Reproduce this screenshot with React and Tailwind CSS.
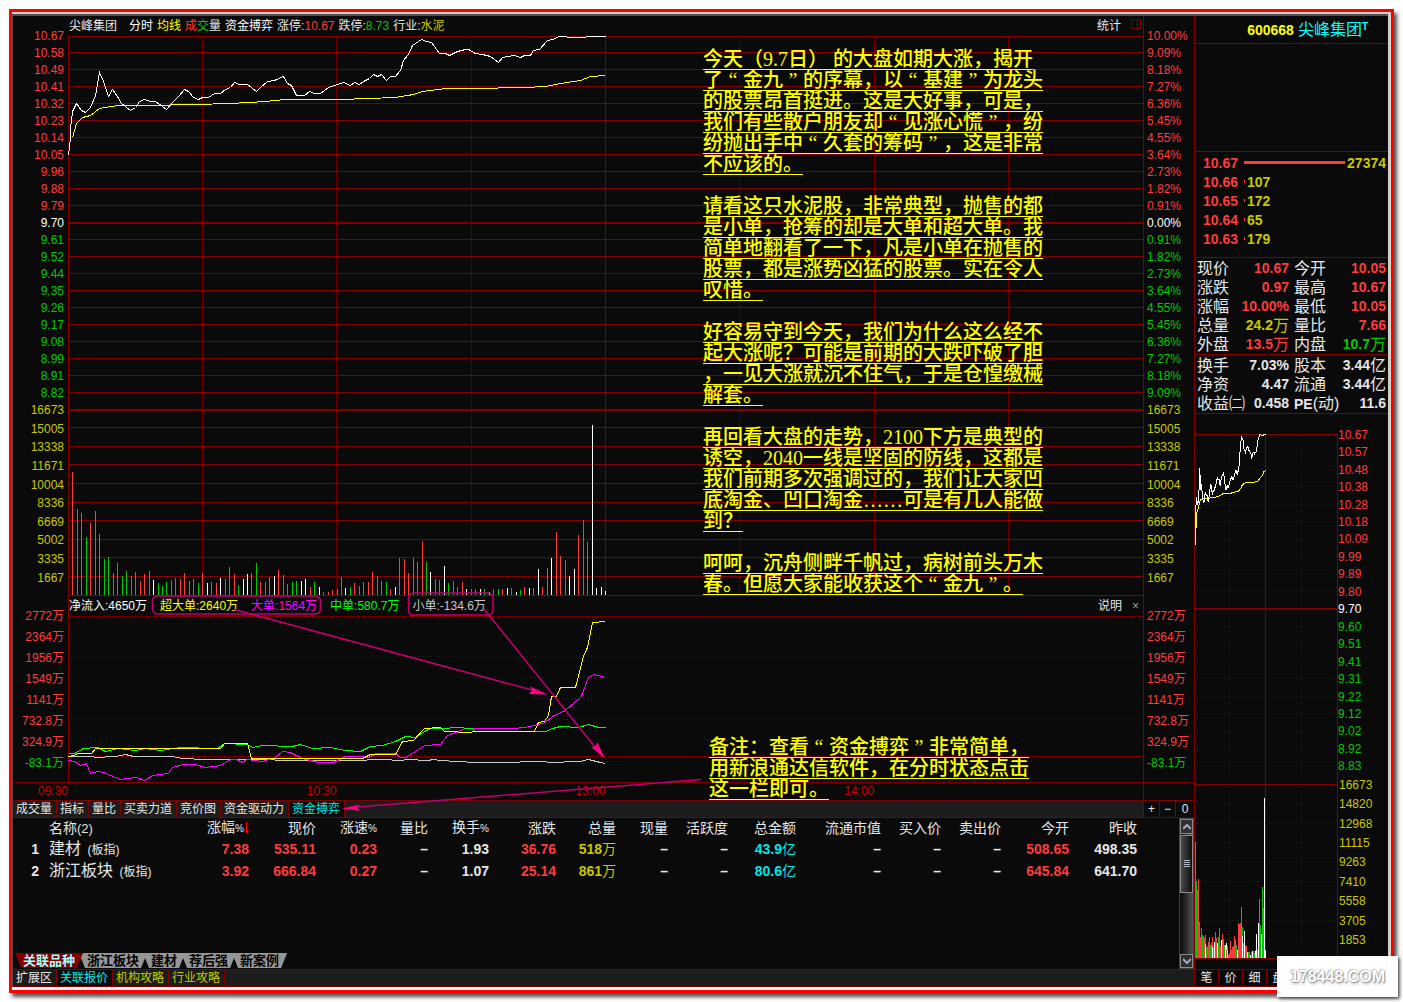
// src/App.jsx
import React from 'react';

const TONES = {
  r: 'text-[#ff3c3c]',
  g: 'text-[#00c800]',
  w: 'text-white',
  y: 'text-[#c8c800]',
  c: 'text-[#00e6e6]',
  s: 'text-[#e6e6e6]',
};

const BAR_COLORS = { r: '#ff3c3c', g: '#00c800', w: '#ffffff' };

const priceLabels = [
  '10.67', '10.58', '10.49', '10.41', '10.32', '10.23', '10.14', '10.05', '9.96', '9.88', '9.79',
  '9.70', '9.61', '9.52', '9.44', '9.35', '9.26', '9.17', '9.08', '8.99', '8.91', '8.82',
];
const percentLabels = [
  '10.00%', '9.09%', '8.18%', '7.27%', '6.36%', '5.45%', '4.55%', '3.64%', '2.73%', '1.82%', '0.91%',
  '0.00%', '0.91%', '1.82%', '2.73%', '3.64%', '4.55%', '5.45%', '6.36%', '7.27%', '8.18%', '9.09%',
];
const volumeLabels = ['16673', '15005', '13338', '11671', '10004', '8336', '6669', '5002', '3335', '1667'];
const fundLabels = ['2772万', '2364万', '1956万', '1549万', '1141万', '732.8万', '324.9万', '-83.1万'];

const miniPriceLabels = [
  '10.67', '10.57', '10.48', '10.38', '10.28', '10.18', '10.09', '9.99', '9.89', '9.80',
  '9.70', '9.60', '9.51', '9.41', '9.31', '9.22', '9.12', '9.02', '8.92', '8.83',
];
const miniVolumeLabels = ['16673', '14820', '12968', '11115', '9263', '7410', '5558', '3705', '1853'];

const priceLine =
  '68,155 70,137 70,128 72,111 76,103 81,110 85,112 90,107 95,95 99,72 103,81 108,96 112,89 117,96 121,103 130,110 135,107 139,101 144,99 150,101 155,101 162,106 166,109 172,102 178,96 184,89 188,91 193,97 198,99 202,97 208,97 214,93 220,93 225,89 230,87 234,82 239,84 247,84 256,91 260,87 267,81 274,80 283,76 287,83 291,85 296,95 304,95 309,91 314,93 320,93 328,87 337,84 343,82 350,85 354,82 359,84 363,81 369,78 373,74 377,76 381,74 386,80 390,76 395,76 400,70 403,60 408,54 412,45 421,39 426,41 431,42 439,53 445,53 449,55 457,51 465,49 468,49 475,53 482,54 490,56 498,62 502,57 514,55 520,57 524,55 530,55 533,50 539,49 547,40 553,39 558,36 575,37 583,37 588,36 605,36';
const averageLine =
  '72,137 76,123 82,117 90,115 99,108 110,106 120,105 145,105 195,104 230,103 265,101 285,99 340,99 395,97 413,94 422,91 445,88 470,88 525,87 545,86 560,83 580,80 590,76 605,75';

const fundLines = [
  {
    color: '#c8c8c8',
    points:
      '68,756 92,756 95,757 115,756 125,754 133,756 172,756 182,758 205,759 258,759 290,760 350,760 383,759 400,760 407,759 428,760 432,759 440,760 475,762 495,762 545,761 548,762 579,761 588,759 600,762 605,763',
  },
  {
    color: '#ff00ff',
    points:
      '68,760 74,761 80,765 86,763 90,773 97,771 103,772 110,775 120,779 136,777 144,780 152,775 168,773 172,767 182,764 195,764 205,767 220,765 230,759 236,759 242,762 246,759 262,761 275,757 282,751 290,752 302,758 318,762 333,762 345,756 360,756 368,757 376,753 395,753 400,757 405,757 415,751 424,745 440,744 447,735 460,730 465,728 515,728 530,726 545,722 552,716 565,710 575,701 580,698 588,677 593,674 598,675 605,677',
  },
  {
    color: '#00ff00',
    points:
      '68,753 74,753 83,748 97,747 105,751 118,748 135,750 145,748 160,750 180,747 217,748 224,743 247,744 252,747 262,745 292,746 300,744 312,748 330,747 345,750 360,751 370,746 382,745 395,741 405,736 415,737 424,731 430,728 445,728 455,727 472,728 475,731 545,731 552,728 560,726 578,727 588,724 598,727 605,727',
  },
  {
    color: '#ffff00',
    points:
      '68,756 73,755 78,753 91,753 95,748 220,748 224,743 247,743 251,758 362,758 370,754 395,754 402,741 413,740 424,728 440,727 444,731 470,732 473,731 534,731 538,722 544,721 548,715 551,696 556,696 560,687 575,687 583,656 587,647 592,622 605,621',
  },
];

// one entry per minute pair: colour + bar height
const volumes = (
  'r123 r86 g82 g58 r72 r84 r61 g36 g38 r22 g32 g19 g24 g19 r23 r14 r21 g24 w15 g12 g9 g13 r15 r17 r16 r22 g14 g16 g12 r22 ' +
  'w12 r13 r12 w17 r16 r28 r21 g10 w16 w21 g22 g32 r13 r13 r18 w19 r25 r20 g11 g13 g14 w14 w16 r8 g13 w8 r3 r3 r5 r6 ' +
  'r18 w7 g8 r12 g9 r13 r13 r23 g19 r14 g13 r6 w8 r37 r36 r22 r37 r33 r54 g33 w23 g16 g15 w29 g12 r14 r8 r13 w6 g6 ' +
  'g6 w6 g6 w3 g6 g6 r6 w7 r7 w3 g5 r8 w7 r7 w26 r8 r27 w37 r63 r39 g35 w19 w26 r60 g75 r53 w170 w7 w8 w4'
)
  .split(' ')
  .map((item) => ({ color: BAR_COLORS[item[0]], height: Number(item.slice(1)) }));

const priceGrid = [36, 52, 69, 86, 103, 120, 137, 154, 171, 188, 205, 239, 256, 273, 290, 307, 324, 341, 358, 375, 392];
const volumeGrid = [427, 446, 464, 483, 502, 520, 539, 557, 576, 595];
const fundGrid = [635, 656, 677, 698, 719, 740, 761];

const article = [
  '今天（9.7日） 的大盘如期大涨，揭开',
  '了“金九”的序幕，以“基建”为龙头',
  '的股票昂首挺进。这是大好事，可是，',
  '我们有些散户朋友却“见涨心慌”，纷',
  '纷抛出手中“久套的筹码”，这是非常',
  '不应该的。',
  '',
  '请看这只水泥股，非常典型，抛售的都',
  '是小单，抢筹的却是大单和超大单。我',
  '简单地翻看了一下，凡是小单在抛售的',
  '股票，都是涨势凶猛的股票。实在令人',
  '叹惜。',
  '',
  '好容易守到今天，我们为什么这么经不',
  '起大涨呢？可能是前期的大跌吓破了胆',
  '，一见大涨就沉不住气，于是仓惶缴械',
  '解套。',
  '',
  '再回看大盘的走势，2100下方是典型的',
  '诱空，2040一线是坚固的防线，这都是',
  '我们前期多次强调过的，我们让大家凹',
  '底淘金、凹口淘金……可是有几人能做',
  '到？',
  '',
  '呵呵，沉舟侧畔千帆过，病树前头万木',
  '春。但愿大家能收获这个“金九”。',
];
const footnote = ['备注：查看“资金搏弈”非常简单，', '用新浪通达信软件，在分时状态点击', '这一栏即可。'];

const orders = [
  ['10.67', '27374'],
  ['10.66', '107'],
  ['10.65', '172'],
  ['10.64', '65'],
  ['10.63', '179'],
];

const quotes = [
  ['现价', '10.67', '', 'r'], ['今开', '10.05', '', 'r'],
  ['涨跌', '0.97', '', 'r'], ['最高', '10.67', '', 'r'],
  ['涨幅', '10.00%', '', 'r'], ['最低', '10.05', '', 'r'],
  ['总量', '24.2', '万', 'y'], ['量比', '7.66', '', 'r'],
  ['外盘', '13.5', '万', 'r'], ['内盘', '10.7', '万', 'g'],
];
const ratios = [
  ['换手', '7.03%', '', 's'], ['股本', '3.44', '亿', 's'],
  ['净资', '4.47', '', 's'], ['流通', '3.44', '亿', 's'],
  ['收益㈡', '0.458', '', 's'], ['PE(动)', '11.6', '', 's'],
];

const columns = [
  ['涨幅%', 'w-[60px]'], ['现价', 'w-[67px]'], ['涨速%', 'w-[61px]'], ['量比', 'w-[51px]'],
  ['换手%', 'w-[61px]'], ['涨跌', 'w-[67px]'], ['总量', 'w-[60px]'], ['现量', 'w-[52px]'],
  ['活跃度', 'w-[60px]'], ['总金额', 'w-[68px]'], ['流通市值', 'w-[85px]'], ['买入价', 'w-[60px]'],
  ['卖出价', 'w-[60px]'], ['今开', 'w-[68px]'], ['昨收', 'w-[68px]'],
];
const rows = [
  {
    name: '建材',
    cells: [['7.38', 'r'], ['535.11', 'r'], ['0.23', 'r'], ['–', 's'], ['1.93', 's'], ['36.76', 'r'], ['518万', 'y'], ['–', 's'], ['–', 's'], ['43.9亿', 'c'], ['–', 's'], ['–', 's'], ['–', 's'], ['508.65', 'r'], ['498.35', 's']],
  },
  {
    name: '浙江板块',
    cells: [['3.92', 'r'], ['666.84', 'r'], ['0.27', 'r'], ['–', 's'], ['1.07', 's'], ['25.14', 'r'], ['861万', 'y'], ['–', 's'], ['–', 's'], ['80.6亿', 'c'], ['–', 's'], ['–', 's'], ['–', 's'], ['645.84', 'r'], ['641.70', 's']],
  },
];

function toneFor(index, zeroIndex) {
  if (index === zeroIndex) return TONES.w;
  return index < zeroIndex ? TONES.r : TONES.g;
}

function Axis({ prices, side }) {
  const align = side === 'left' ? 'w-[55px] pr-1 text-right' : 'w-[51px] border-l border-[#800000] pl-[3px]';
  return (
    <div className={`shrink-0 pt-[11px] text-xs ${align}`}>
      {prices.map((label, i) => (
        <div key={i} className={`h-[17px] leading-[18px] ${toneFor(i, 11)}`}>{label}</div>
      ))}
      <div className="flex h-[186px] flex-col text-[#c8c800]">
        {volumeLabels.map((label) => (
          <div key={label} className="flex flex-1 items-center"><span className="w-full">{label}</span></div>
        ))}
      </div>
      <div className="pt-[19px]">
        {fundLabels.map((label, i) => (
          <div key={label} className={`h-[21px] leading-[21px] ${toneFor(i, 6.5)}`}>{label}</div>
        ))}
      </div>
    </div>
  );
}

function PricePlot() {
  return (
    <svg viewBox="68 36 1075 560" preserveAspectRatio="none" className="block h-[560px] w-full" shapeRendering="crispEdges">
      <g stroke="#800000" strokeWidth="1">
        {[...priceGrid, ...volumeGrid].map((y) => (
          <line key={y} x1="68" x2="1143" y1={y + 0.5} y2={y + 0.5} />
        ))}
        <line x1="68" x2="1143" y1="223" y2="223" strokeWidth="2" />
        <line x1="68" x2="1143" y1="410" y2="410" strokeWidth="2" />
        <line x1="68.5" x2="68.5" y1="36" y2="596" />
        <line x1="605.5" x2="605.5" y1="36" y2="596" />
        {[202, 336, 471, 739, 874, 1008].map((x) => (
          <line key={x} x1={x + 0.5} x2={x + 0.5} y1="38" y2="595" strokeDasharray="1 1" />
        ))}
      </g>
      {volumes.map((bar, i) => (
        <rect key={i} x={Math.round(68 + 4.475 * (i + 1))} y={595 - bar.height} width="1" height={bar.height} fill={bar.color} />
      ))}
      <g fill="none" strokeWidth="1" transform="translate(0.5 0.5)">
        <polyline points={averageLine} stroke="#ffff00" />
        <polyline points={priceLine} stroke="#ffffff" />
      </g>
    </svg>
  );
}

function FundPlot() {
  return (
    <svg viewBox="68 616 1075 166" preserveAspectRatio="none" className="block h-[166px] w-full" shapeRendering="crispEdges">
      <g stroke="#800000" strokeWidth="1">
        {fundGrid.map((y) => (
          <line key={y} x1="71" x2="1143" y1={y + 0.5} y2={y + 0.5} strokeDasharray="1 3" />
        ))}
        <line x1="70" x2="1143" y1="616.5" y2="616.5" strokeDasharray="1 1" />
        <line x1="70" x2="1143" y1="756.5" y2="756.5" strokeDasharray="1 1" />
        <line x1="68.5" x2="68.5" y1="616" y2="782" />
      </g>
      <g fill="none" strokeWidth="1" transform="translate(0.5 0.5)">
        {fundLines.map((line) => (
          <polyline key={line.color} points={line.points} stroke={line.color} />
        ))}
      </g>
    </svg>
  );
}

function ChartHeader() {
  return (
    <div className="flex h-5 items-center justify-between pl-px text-xs whitespace-nowrap">
      <div className="flex gap-1 text-[#e6e6e6]">
        <span className="mr-2">尖峰集团</span>
        <span className="text-white">分时</span>
        <span className="text-[#ffff00]">均线</span>
        <span>
          <span className="text-[#ff3c3c]">成</span>
          <span className="text-[#00c800]">交</span>量
        </span>
        <span className="text-white">资金搏弈</span>
        <span>涨停:<span className="text-[#ff3c3c]">10.67</span></span>
        <span>跌停:<span className="text-[#00c800]">8.73</span></span>
        <span>行业:<span className="text-[#c8c800]">水泥</span></span>
      </div>
      <div className="flex items-center gap-[10px] pr-[2px]">
        <button type="button" className="text-[#e6e6e6]">统计</button>
        <svg width="10" height="10" viewBox="0 0 10 10" fill="none" stroke="#800000" className="mb-1">
          <path d="M.5.5h9v9h-9zM6.5.5v9" />
        </svg>
      </div>
    </div>
  );
}

function FundHeader() {
  return (
    <div className="flex h-5 items-center justify-between border-l border-[#800000] text-xs whitespace-nowrap">
      <div className="flex gap-[13px]">
        <span className="text-white">净流入:4650万</span>
        <span className="text-[#ffff00]">超大单:2640万</span>
        <span className="text-[#ff00ff]">大单:1564万</span>
        <span className="text-[#00ff00]">中单:580.7万</span>
        <span className="text-[#c8c8c8]">小单:-134.6万</span>
      </div>
      <div className="flex items-center gap-[10px] pr-1">
        <button type="button" className="text-[#e6e6e6]">说明</button>
        <button type="button" className="text-[#a0a0a0]">×</button>
      </div>
    </div>
  );
}

function TabCell({ children, tone }) {
  return (
    <button type="button" className={`border-r border-[#800000] pr-1 pl-[3px] ${tone}`}>
      {children}
    </button>
  );
}

function IndicatorTabs() {
  return (
    <div className="flex h-[18px] border-y border-[#800000] bg-[#1c1c1c] text-xs leading-4">
      {['成交量', '指标', '量比', '买卖力道', '竞价图', '资金驱动力'].map((name) => (
        <TabCell key={name} tone="text-[#e6e6e6]">{name}</TabCell>
      ))}
      <TabCell tone="bg-[#0a0a0a] text-[#00e6e6]">资金搏弈</TabCell>
      <div className="ml-auto flex bg-[#0a0a0a] text-[#e6e6e6]">
        <button type="button" className="w-4 border-l border-[#800000]">+</button>
        <button type="button" className="w-4 border-l border-[#800000]">−</button>
        <button type="button" className="w-[19px] border-l border-[#800000]">0</button>
      </div>
    </div>
  );
}

// digits are bold, the 万/亿 unit is regular
function Amount({ text }) {
  const unit = /[万亿]$/.test(text) ? text.slice(-1) : '';
  const number = unit ? text.slice(0, -1) : text;
  return (
    <>
      <span className="font-bold">{number}</span>
      {unit && <span>{unit}</span>}
    </>
  );
}

function RelatedTable() {
  return (
    <table className="w-full table-fixed text-right text-sm whitespace-nowrap">
      <thead>
        <tr className="h-[19px] leading-[18px] text-[#e6e6e6]">
          <th className="w-[26px]" />
          <th className="w-[150px] pl-[10px] text-left font-normal">名称<span className="text-[13px]">(2)</span></th>
          {columns.map(([name, width]) => (
            <th key={name} className={`font-normal ${width}`}>
              {name.replace('%', '')}
              {name.includes('%') && <span className="text-[10px]">%</span>}
              {name === '涨幅%' && (
                <svg width="5" height="12" viewBox="0 0 5 12" className="inline" stroke="#ff0000" fill="none">
                  <path d="M2.5 0v11M.5 8l2 3 2-3" />
                </svg>
              )}
            </th>
          ))}
          <th />
        </tr>
      </thead>
      <tbody>
        {rows.map((row, i) => (
          <tr key={row.name} className="h-[22px] leading-[20px] text-[#e6e6e6]">
            <td className="font-bold">{i + 1}</td>
            <td className="pl-[10px] text-left text-base leading-[20px]">
              {row.name} <span className="pl-[2px] text-xs">(板指)</span>
            </td>
            {row.cells.map(([text, tone], j) => (
              <td key={j} className={TONES[tone]}>
                <Amount text={text} />
              </td>
            ))}
            <td />
          </tr>
        ))}
      </tbody>
    </table>
  );
}

function Scrollbar() {
  const box = 'flex w-full items-center justify-center border border-[#8a8a8a] bg-[#303030]';
  return (
    <div className="flex w-[15px] shrink-0 flex-col border border-[#404040] bg-linear-to-r from-[#0a0a0a] to-[#555555]">
      <button type="button" aria-label="向上" className={`h-[15px] ${box}`}>
        <svg width="8" height="6" viewBox="0 0 8 6" fill="none" stroke="#a0aac0" strokeWidth="2"><path d="M0 5l4-4 4 4" /></svg>
      </button>
      <div className="mt-px flex h-[58px] items-center justify-center border border-[#8a8a8a] bg-linear-to-r from-[#4a4a4a] to-[#101010]">
        <svg width="6" height="8" viewBox="0 0 6 8" stroke="#b0b8c8"><path d="M0 .5h6M0 2.5h6M0 4.5h6M0 6.5h6" /></svg>
      </div>
      <button type="button" aria-label="向下" className={`mt-auto h-[14px] ${box}`}>
        <svg width="8" height="6" viewBox="0 0 8 6" fill="none" stroke="#a0aac0" strokeWidth="2"><path d="M0 1l4 4 4-4" /></svg>
      </button>
    </div>
  );
}

function SheetTabs() {
  const shape = 'h-[15px] px-2 [clip-path:polygon(0_0,100%_0,calc(100%-6px)_100%,6px_100%)]';
  return (
    <div className="flex h-4 pl-[2px] text-[13px] leading-[15px] font-bold">
      <button type="button" className={`z-10 bg-[#800000] text-[#a0ffff] ${shape}`}>关联品种</button>
      {['浙江板块', '建材', '荐后强', '新案例'].map((name) => (
        <button key={name} type="button" className={`-ml-1 bg-[#969696] text-black ${shape}`}>{name}</button>
      ))}
    </div>
  );
}

function Footer() {
  return (
    <div className="flex h-[18px] border-y border-[#800000] bg-[#1c1c1c] text-xs leading-4">
      <TabCell tone="text-[#e6e6e6]">扩展区</TabCell>
      <TabCell tone="bg-[#0a0a0a] text-[#00e6e6]">关联报价</TabCell>
      <TabCell tone="text-[#c8c800]">机构攻略</TabCell>
      <TabCell tone="text-[#c8c800]">行业攻略</TabCell>
    </div>
  );
}

// curly quotes sit in a full-width cell like the characters around them
function Handwriting({ lines }) {
  return lines.map((line, i) => (
    <p key={i} className="h-[21px]">
      {line && (
        <span className="block h-[21px] w-fit border-b border-[#ffff00] leading-[20px] whitespace-pre">
          {line.split(/([“”])/).map((part, j) =>
            j % 2 ? <span key={j} className="inline-block w-5 text-center">{part}</span> : part
          )}
        </span>
      )}
    </p>
  ));
}

function Annotations() {
  const note =
    "absolute font-['Liberation_Serif','Noto_Sans_CJK_SC',serif] text-[20px] font-medium text-[#ffff00] [text-spacing-trim:space-all]";
  return (
    <>
      <svg width="1181" height="802" viewBox="13 16 1181 802" className="pointer-events-none absolute top-0 left-0">
        <g fill="none" stroke="#c0006c" strokeWidth="1.6">
          <rect x="152.5" y="596" width="168" height="18" rx="5" />
          <rect x="408.5" y="593" width="84.5" height="22" rx="5" />
          <path d="M234 609.500L532 690" />
          <path d="M484 609L595 747" />
          <path d="M701 779.500L358 807" />
        </g>
        <g fill="#ff0084">
          <path d="M548 694.500L529 694l3-3.500-2-4z" />
          <path d="M605 758.500L591 747l4-.5 2.500-4z" />
          <path d="M342 808.500L360 804.500l-3 3 3 3.500z" />
        </g>
      </svg>
      <div className={`${note} top-[33px] left-[690px]`}>
        <Handwriting lines={article} />
      </div>
      <div className={`${note} top-[721px] left-[696px]`}>
        <Handwriting lines={footnote} />
      </div>
    </>
  );
}

function QuoteGrid({ items }) {
  return (
    <dl className="grid grid-cols-2 gap-x-[5px] border-b border-[#800000] pt-px pr-[2px] pl-[2px] whitespace-nowrap">
      {items.map(([label, value, unit, tone]) => (
        <div key={label} className="flex h-[19px] items-center justify-between">
          <dt className="text-base leading-[19px] text-[#e6e6e6]">
            {label.startsWith('PE') ? <><span className="text-sm font-bold">PE</span>{label.slice(2)}</> : label}
          </dt>
          <dd className={`flex items-center text-sm leading-[19px] font-bold ${TONES[tone]}`}>
            {value}
            {unit && <span className="text-base leading-[19px] font-normal">{unit}</span>}
          </dd>
        </div>
      ))}
    </dl>
  );
}

function MiniChart() {
  const labelLines = miniPriceLabels.map((_, i) => Math.round(435 + i * 17.45));
  const volumeLines = miniVolumeLabels.map((_, i) => Math.round(785 + i * 19.4));
  return (
    <div className="flex h-[545px]">
      <svg viewBox="1195 415 143 545" preserveAspectRatio="none" className="block h-[545px] min-w-0 flex-1" shapeRendering="crispEdges">
        <g stroke="#800000" strokeWidth="1">
          {[...labelLines, ...volumeLines].map((y) => (
            <line key={y} x1="1197" x2="1337" y1={y + 0.5} y2={y + 0.5} strokeDasharray="1 3" />
          ))}
          {[435, 785, 959].map((y) => (
            <line key={y} x1="1195" x2="1338" y1={y + 0.5} y2={y + 0.5} />
          ))}
          <line x1="1195" x2="1338" y1="610" y2="610" strokeWidth="2" />
          {[1229, 1301].map((x) => (
            <line key={x} x1={x + 0.5} x2={x + 0.5} y1="437" y2="959" strokeDasharray="1 2" />
          ))}
          {[1265, 1337].map((x) => (
            <line key={x} x1={x + 0.5} x2={x + 0.5} y1="435" y2="959" />
          ))}
        </g>
        {volumes.map((bar, i) => {
          const height = Math.round(bar.height * 0.94);
          return <rect key={i} x={Math.round(1194 + 0.595 * (i + 1))} y={959 - height} width="1" height={height} fill={bar.color} />;
        })}
        <g fill="none" strokeWidth="1" transform="translate(1186.6 402.02) scale(0.131 0.93)">
          <polyline points={averageLine} stroke="#ffff00" vectorEffect="non-scaling-stroke" />
          <polyline points={priceLine} stroke="#ffffff" vectorEffect="non-scaling-stroke" />
        </g>
      </svg>
      <div className="w-[50px] pt-3 text-xs">
        <div className="flex h-[349px] flex-col">
          {miniPriceLabels.map((label, i) => (
            <div key={label} className={`flex flex-1 items-center leading-none ${toneFor(i, 10)}`}>{label}</div>
          ))}
        </div>
        <div className="flex h-[175px] flex-col pl-px text-[#c8c800]">
          {miniVolumeLabels.map((label) => (
            <div key={label} className="flex flex-1 items-center leading-none">{label}</div>
          ))}
        </div>
      </div>
    </div>
  );
}

function SidePanel() {
  return (
    <aside className="flex w-[194px] shrink-0 flex-col border-l border-[#800000]">
      <h1 className="flex h-7 items-center justify-end gap-1 border-b border-[#800000] pr-5 text-base text-[#00ffff]">
        <span className="text-sm font-bold text-[#ffff00]">600668</span>
        <span>尖峰集团<sup className="text-[10px] font-bold">T</sup></span>
      </h1>
      <div className="h-[108px] border-b border-[#800000]" />
      <div className="h-[106px] border-b border-[#800000] pt-px pr-[2px] pl-2 text-sm font-bold">
        {orders.map(([price, qty], i) => (
          <div key={price} className="flex h-[19px] items-center">
            <span className="w-[41px] text-[#ff3c3c]">{price}</span>
            <span className={i === 0 ? 'h-[3px] flex-1 bg-[#ff3c3c]' : 'h-[3px] w-px bg-[#ff3c3c]'} />
            <span className="pl-[2px] text-[#c8c800]">{qty}</span>
          </div>
        ))}
      </div>
      <QuoteGrid items={quotes} />
      <QuoteGrid items={ratios} />
      <MiniChart />
      <div className="mt-auto flex h-[18px] border-y border-[#800000] text-xs leading-4 text-[#e6e6e6]">
        {['笔', '价', '细', '盘'].map((name) => (
          <button key={name} type="button" className="w-6 border-r border-[#800000]">{name}</button>
        ))}
      </div>
    </aside>
  );
}

function App() {
  return (
    <div className="relative min-h-screen bg-white p-[9px] font-['Liberation_Sans','Noto_Sans_CJK_SC',sans-serif]">
      <div className="border-[3px] border-[#ff0000] shadow-[3px_4px_4px_#000000b0]">
        <div className="border-t-2 border-r-[3px] border-b-[3px] border-[#d4d0c8] border-b-[#f4f4f4]">
          <div className="relative flex border-t-2 border-l border-[#505050] bg-[#0a0a0a]">
            <main className="flex min-w-0 flex-1 flex-col">
              <div className="flex h-[766px]">
                <Axis prices={priceLabels} side="left" />
                <div className="min-w-0 flex-1">
                  <ChartHeader />
                  <PricePlot />
                  <FundHeader />
                  <FundPlot />
                </div>
                <Axis prices={percentLabels} side="right" />
              </div>
              <div className="flex h-[18px] border-t border-[#800000] pl-[25px] text-xs leading-[17px] text-[#c80000]">
                {['09:30', '10:30', '13:00', '14:00'].map((time) => (
                  <span key={time} className="flex-1">{time}</span>
                ))}
                <span className="w-[30px]" />
                <span className="w-[51px] border-l border-[#800000]" />
              </div>
              <IndicatorTabs />
              <div className="flex min-h-[151px] flex-1">
                <div className="flex min-w-0 flex-1 flex-col justify-between">
                  <RelatedTable />
                  <SheetTabs />
                </div>
                <Scrollbar />
              </div>
              <Footer />
            </main>
            <SidePanel />
            <Annotations />
          </div>
        </div>
      </div>
      <div className="absolute right-[5px] bottom-[5px] flex h-[41px] w-[121px] items-center justify-center bg-white shadow-[2px_2px_3px_#00000090]">
        <span className="text-base font-bold text-white [text-shadow:0_0_1px_#888,1px_1px_1px_#999,-1px_-1px_1px_#ccc,1px_3px_2px_#ddd]">
          178448.COM
        </span>
      </div>
    </div>
  );
}

export default App;
